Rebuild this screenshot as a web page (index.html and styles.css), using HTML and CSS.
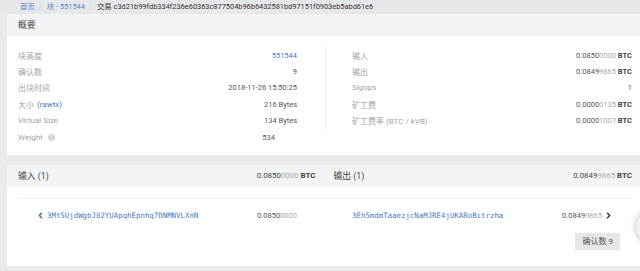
FILE: index.html
```html
<!DOCTYPE html>
<html lang="zh">
<head>
<meta charset="utf-8">
<title>交易</title>
<link rel="stylesheet" href="styles.css">
</head>
<body>
<nav class="crumb">
  <a class="crumb-link">首页</a><span class="sep">/</span><a class="crumb-link">块 - 551544</a><span class="sep">/</span><span class="crumb-cur">交易 c3d21b99fdb334f236e60363c877504b96b6432581bd97151f0903eb5abd61e6</span>
</nav>
<main class="wrap">
  <section class="card">
    <header class="card-h"><span class="h-title">概要</span></header>
    <div class="card-b sum">
      <div class="col col-l">
        <div class="row"><span class="lbl">块高度</span><a class="val link">551544</a></div>
        <div class="row"><span class="lbl">确认数</span><span class="val">9</span></div>
        <div class="row"><span class="lbl">出块时间</span><span class="val">2018-11-26 15:50:25</span></div>
        <div class="row"><span class="lbl">大小 <a class="link">(rawtx)</a></span><span class="val">216 Bytes</span></div>
        <div class="row"><span class="lbl">Virtual Size</span><span class="val">134 Bytes</span></div>
        <div class="row"><span class="lbl">Weight <span class="help">?</span></span><span class="val val-w">534</span></div>
      </div>
      <div class="col col-r">
        <div class="row"><span class="lbl">输入</span><span class="val"><span class="d">0.0850</span><span class="l">0000</span> <b class="u">BTC</b></span></div>
        <div class="row"><span class="lbl">输出</span><span class="val"><span class="d">0.0849</span><span class="l">9865</span> <b class="u">BTC</b></span></div>
        <div class="row"><span class="lbl">Sigops</span><span class="val">1</span></div>
        <div class="row"><span class="lbl">矿工费</span><span class="val"><span class="d">0.0000</span><span class="l">0135</span> <b class="u">BTC</b></span></div>
        <div class="row"><span class="lbl">矿工费率 (BTC / kVB)</span><span class="val"><span class="d">0.0000</span><span class="l">1007</span> <b class="u">BTC</b></span></div>
      </div>
    </div>
  </section>

  <section class="card">
    <header class="card-h io-h">
      <div class="io-hc io-hl"><span class="h-title">输入 (1)</span><span class="h-amt"><span class="d">0.0850</span><span class="l">0000</span> <b class="u">BTC</b></span></div>
      <div class="io-hc io-hr"><span class="h-title">输出 (1)</span><span class="h-amt"><span class="d">0.0849</span><span class="l">9865</span> <b class="u">BTC</b></span></div>
    </header>
    <div class="card-b io">
      <div class="io-line">
        <div class="io-row io-in">
          <svg class="chev" viewBox="0 0 6 8" width="5" height="7"><path d="M4.6 0.8 L1.6 4 L4.6 7.2" fill="none" stroke="#3f70b0" stroke-width="1.7"/></svg>
          <a class="addr">3Mt5UjdWgbJ82YUApqhEpnhq7DNMNVLXnN</a>
          <span class="amt"><span class="d">0.0850</span><span class="l">0000</span></span>
        </div>
        <div class="io-row io-out">
          <a class="addr">3Eh5mdmTaaezjcNaMJRE4jUKARoBitrzha</a>
          <span class="amt"><span class="d">0.0849</span><span class="l">9865</span></span>
          <svg class="chev chev-r" viewBox="0 0 6 8" width="5" height="7"><path d="M1.4 0.8 L4.4 4 L1.4 7.2" fill="none" stroke="#333" stroke-width="1.7"/></svg>
        </div>
      </div>
      <div class="badge-row"><span class="badge">确认数 9</span></div>
    </div>
  </section>
</main>
<div class="fab" aria-hidden="true"></div>
</body>
</html>
```
FILE: styles.css
```css
* { box-sizing: border-box; }
html, body { margin: 0; padding: 0; }
body {
  background: #e8eaed;
  font-family: Roboto, "Noto Sans CJK SC", sans-serif;
  font-size: 7.5px;
  color: #555;
  width: 640px;
  height: 271px;
  overflow: hidden;
  position: relative;
}
a { text-decoration: none; }

.crumb {
  height: 14px;
  line-height: 13px;
  padding-left: 20px;
  background: #e5e7ea;
  white-space: nowrap;
  font-size: 7.4px;
}
.crumb-link { color: #5a86c0; }
.sep { color: #c4c7cc; margin: 0 5px 0 4px; }
.crumb-cur { color: #333; }

.wrap { padding-left: 7px; }
.card { background: #fff; margin-bottom: 10px; }
.card-h {
  height: 22px;
  line-height: 22px;
  background: #f3f4f6;
  padding: 0 8px 0 11px;
}
.h-title { font-size: 8.8px; color: #444; }

.card-b { padding: 0 8px 0 11px; }

.sum { display: flex; align-items: flex-start; padding-top: 11px; padding-bottom: 10px; }
.col { width: 307px; }
.col-l { padding-right: 28px; }
.col-r { border-left: 1px solid #eceef0; padding-left: 26px; width: 307px; }
.row {
  height: 16.4px;
  display: flex;
  align-items: center;
  justify-content: space-between;
}
.lbl { color: #a3a3a3; font-size: 8px; display: flex; align-items: center; gap: 3px; }
.val { color: #555; }
.val-w { margin-right: 22px; }
.link { color: #4a7bbb; }
.help {
  width: 7px; height: 7px; border-radius: 50%;
  background: #d4d4d4; color: #fff; font-size: 5px;
  display: inline-flex; align-items: center; justify-content: center;
  margin-left: 2px;
}
.d { color: #555; }
.l { color: #aaa; }
.u { color: #444; font-weight: 700; }

.io-h { display: grid; grid-template-columns: 1fr 1fr; padding: 0; }
.io-hc { display: flex; justify-content: space-between; align-items: center; }
.io-hl { padding: 0 8px 0 11px; }
.io-hr { padding: 0 8px 0 10px; }
.h-amt { font-size: 7.9px; }
.h-amt .d { color: #444; }

.io { padding-top: 11px; padding-bottom: 16px; }
.io-line { border-top: 1px solid #eceef0; display: grid; grid-template-columns: 307px 307px; padding-top: 8px; }
.io-row { height: 16px; display: flex; align-items: center; }
.io-in { padding-left: 20px; padding-right: 28px; }
.io-out { padding-left: 27px; padding-right: 21px; }
.chev { margin-right: 4px; }
.chev-r { margin-left: 4px; margin-right: 0; }
.addr {
  font-family: "DejaVu Sans Mono", "Liberation Mono", monospace;
  font-size: 7.4px;
  color: #4a7bbb;
  flex: 1;
}
.amt { color: #555; }

.badge-row { display: flex; justify-content: flex-end; padding-right: 12px; margin-top: 10px; }
.badge {
  height: 17px; line-height: 17px;
  padding: 0 7px 0 8px;
  background: #e6e6e6;
  color: #555;
  font-size: 8px;
}

.fab {
  position: absolute;
  left: 636px; top: 210px;
  width: 34px; height: 34px;
  border-radius: 50%;
  background: #f0f0f0;
  box-shadow: 0 0 6px rgba(0,0,0,.3);
}
```
